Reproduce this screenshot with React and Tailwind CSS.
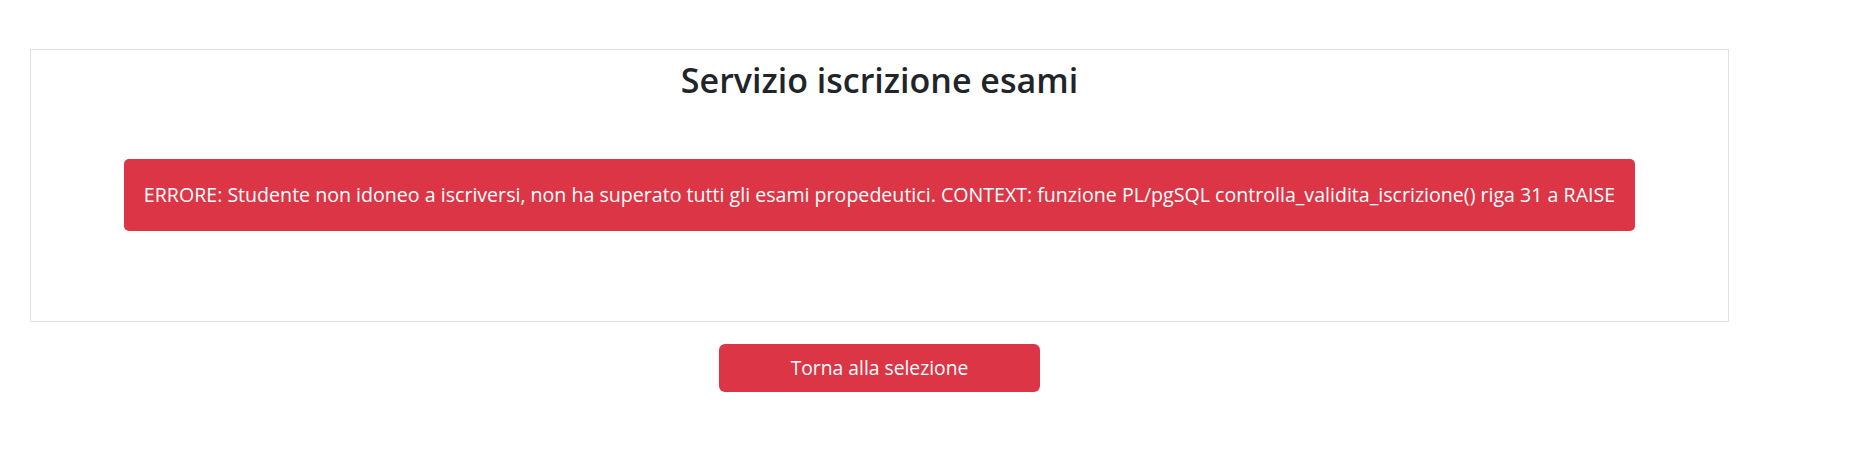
import React from 'react';

const App = () => {
  return (
    <div className="min-h-[464px] bg-white font-['Open_Sans',sans-serif] text-[#212529]">
      <div className="pt-[49px] pl-[30px] w-[1729px]">
        <div className="border border-[#dee2e6] pt-[9px] pb-[90px]">
          <h3 className="text-center text-[34px] leading-[42px] font-semibold text-[#212529]">
            Servizio iscrizione esami
          </h3>
          <div className="mx-[93px] mt-[58px] rounded-[5px] bg-[#dc3545] px-2 py-[21px] text-center text-[19.6px] leading-[30px] text-white whitespace-nowrap">
            ERRORE: Studente non idoneo a iscriversi, non ha superato tutti gli esami propedeutici. CONTEXT: funzione PL/pgSQL controlla_validita_iscrizione() riga 31 a RAISE
          </div>
        </div>
        <div className="mt-[22px] flex justify-center">
          <button className="w-[321px] h-[48px] rounded-[6px] bg-[#dc3545] text-[19.3px] text-white">
            Torna alla selezione
          </button>
        </div>
      </div>
    </div>
  );
};

export default App;
